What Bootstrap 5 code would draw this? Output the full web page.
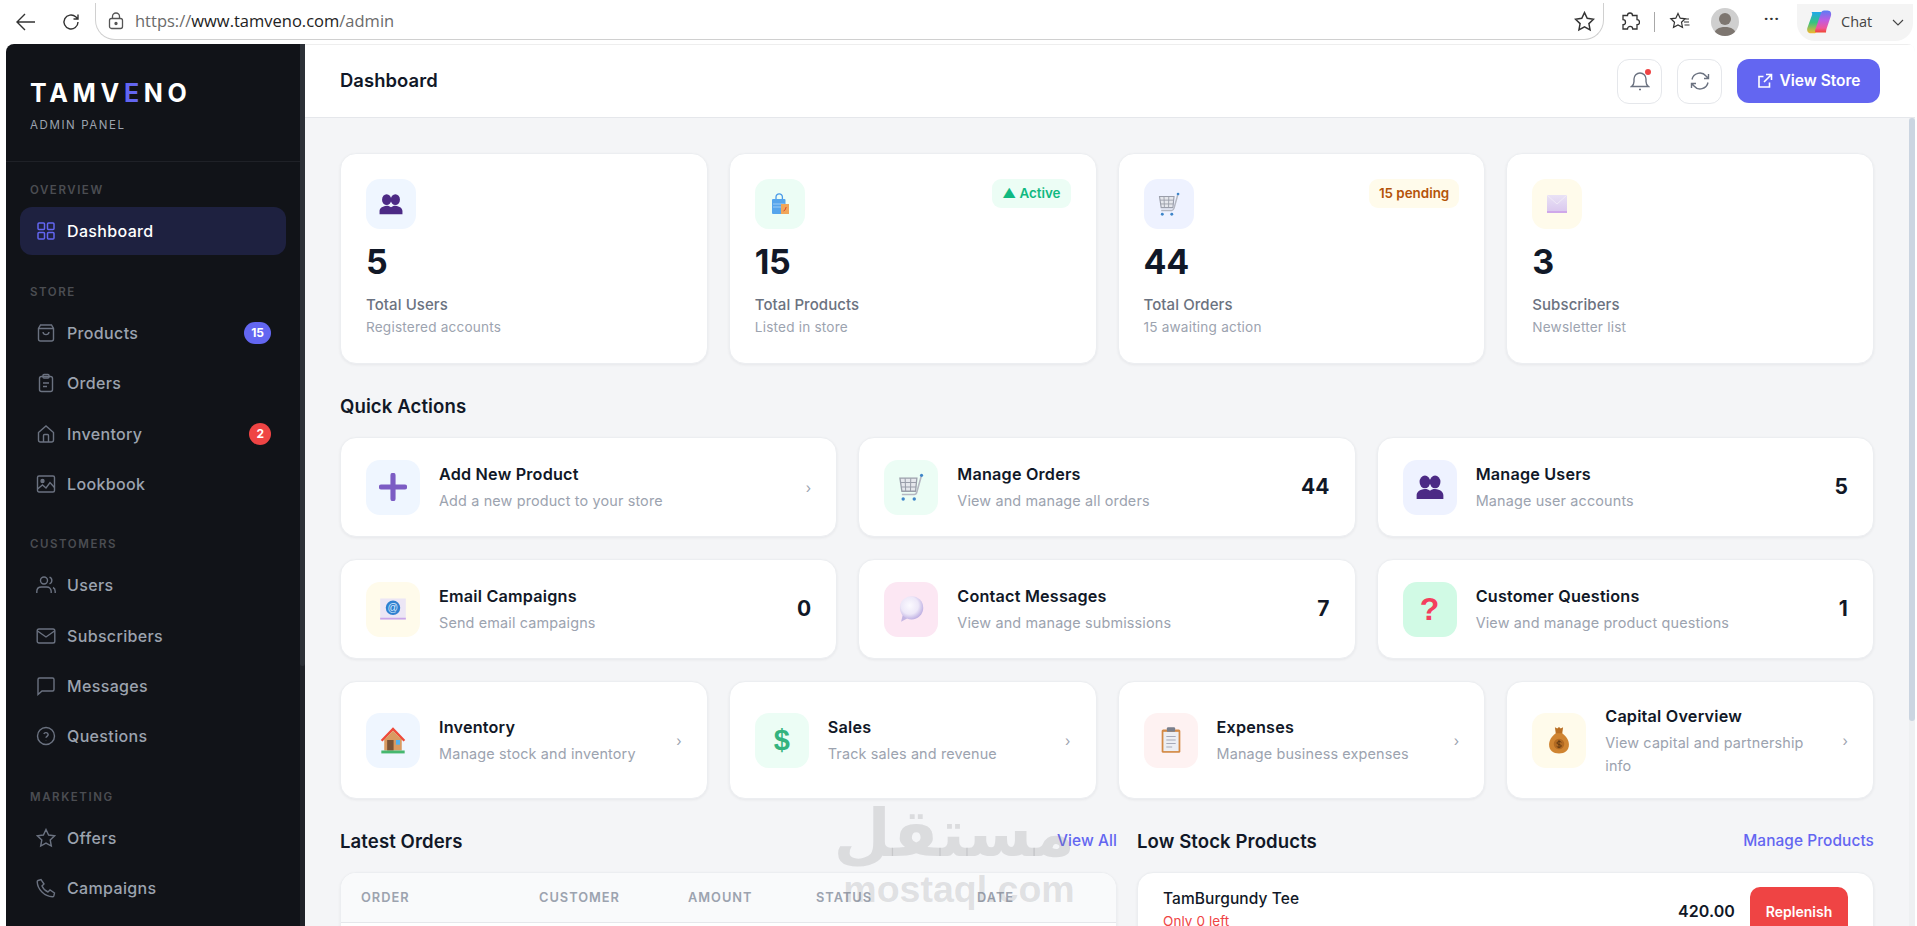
<!DOCTYPE html>
<html lang="en">
<head>
<meta charset="utf-8">
<title>Tamveno Admin</title>
<link href="https://cdn.jsdelivr.net/npm/bootstrap@5.3.0/dist/css/bootstrap.min.css" rel="stylesheet">
<style>
html,body{height:926px;overflow:hidden;background:#fff}
body{font-family:Inter,"Noto Sans",sans-serif;color:#111827;letter-spacing:.005em}
.chrome{height:44px;font-family:"Open Sans","Noto Sans",sans-serif;color:#333;padding-left:15px}
.chrome-ic{color:#333;flex:none}
.ic-reload{margin-left:24px}
.addr{width:1509px;height:37px;margin-left:14px;margin-top:-1px;border:1px solid #d0d0d0;border-top:0;border-radius:0 0 20px 20px;padding:0 8px 0 12px;font-size:16.5px;letter-spacing:0;flex:none}
.addr .dim{color:#6b6b6b}.addr .host{color:#222}
.ic-lock{flex:none;margin-right:11px}
.ic-star-b{margin-left:auto}
.ic-puzzle{margin-left:16px}
.sep-v{width:1px;height:20px;background:#a8a8a8;margin:0 14px;flex:none}
.avatar{width:28px;height:28px;border-radius:50%;background:#cfcfcf;overflow:hidden;margin-left:20px;flex:none}
.dots{font-size:15px;font-weight:700;letter-spacing:1px;line-height:1;margin-top:-7px;margin-left:25px;width:18px}
.chat-pill{width:116px;height:37px;border-radius:0 0 18px 18px;background:#f4f4f4;margin-left:15px;padding-left:8px;font-size:14.5px;letter-spacing:0;flex:none}
.chat-t{color:#444;margin-left:8px}
.shell{height:882px;padding-left:6px;padding-right:2px}
.side{width:299px;background:#111318;border-radius:8px 0 0 0;overflow:hidden;flex:none}
.side-inner{width:294px;flex:none}
.rail-dark{width:5px;background:#1f2228;flex:none}
.rail-dark i{display:block;height:622px;background:#2c3037;border-radius:0 0 3px 3px}
.brand-box{height:118px;padding:34px 24px 0;border-bottom:1px solid #1f2127}
.brand-name{font-size:25px;font-weight:700;letter-spacing:4.7px;color:#fff;line-height:30px}
.brand-name em{font-style:normal;color:#6366f1}
.brand-sub{font-size:11.5px;letter-spacing:1.6px;color:#9ca3af;margin-top:9px;line-height:16px}
.side-sec{padding:26.5px 14px 0}
.side-sec.first{padding-top:20px}
.side-sec.second{padding-top:27px}
.side-label{font-size:11.5px;font-weight:600;letter-spacing:1.55px;color:#4b4d52;line-height:16px;margin:0 0 9px 10px}
.side-link{height:48px;margin-bottom:2.2px;border-radius:12px;padding:0 15px 0 17px;color:#9ca3af;font-size:16px;font-weight:500;letter-spacing:.35px;text-decoration:none}
.side-link svg{width:20px;height:20px;color:#6b7280;margin-right:11px;flex:none;margin-left:-1px}
.side-link.on{background:#1e2140;color:#fff}
.side-link.on svg{color:#6366f1}
.pill{border-radius:11px;height:22px;line-height:22px;padding:0 7px;font-size:12px;font-weight:700;color:#fff;letter-spacing:0}
.pill-i{background:#6366f1}.pill-r{background:#ef4444}
.mainp{min-width:0;background:#f4f5f7;border-radius:0 8px 0 0;overflow:hidden}
.toph{height:74px;background:#fff;border-bottom:1px solid #e5e7eb;border-top:1px solid #eee;padding:0 35px 0 35px}
.toph h1{font-size:18.4px;font-weight:600;margin:0 0 2px}
.tbtn{width:45px;height:45px;border:1px solid #e5e7eb;border-radius:12px;background:#fff;color:#6b7280;padding:0;margin-left:15px}
.tbtn svg{width:20px;height:20px}
.dot{width:6px;height:6px;border-radius:50%;background:#ef4444;top:9px;right:10px}
.vbtn{width:143px;height:44px;background:#6366f1;border:0;border-radius:12px;color:#fff;font-size:15.5px;font-weight:600;margin-left:15px;padding:0}
.vbtn svg{width:16px;height:16px;margin-right:7px}
.pane{height:808px;overflow:hidden}
.pane-in{padding:35px 35px 0 35px;min-width:0}
.rail-light{width:6px;background:#eef0f2;flex:none}
.rail-light i{display:block;height:603px;background:#cbd5e1;border-radius:3px}
.g4{display:grid;grid-template-columns:repeat(4,1fr);gap:22px 21px}
.g3{display:grid;grid-template-columns:repeat(3,1fr);gap:22px 21px}
.g2{display:grid;grid-template-columns:777fr 737fr;gap:20px}
.row-gap{margin-top:22px}
.tile{border:1px solid #eceef1;border-radius:16px;box-shadow:0 1px 3px rgba(17,24,39,.06);background:#fff}
.stat{height:211px;padding:25px 25px 0}
.boxi{width:50px;height:50px;border-radius:14px}
.boxi svg{width:24px;height:24px}
.boxa{width:54px;height:55px;border-radius:14px;flex:none}
.boxa svg{width:28px;height:28px}
.b-blue{background:#eff6ff}.b-green{background:#ecfdf5}.b-ind{background:#eef2ff}.b-yel{background:#fffbeb}.b-pink{background:#fce7f3}.b-mint{background:#d1fae5}.b-red{background:#fef2f2}
.chip{border-radius:9px;height:29px;line-height:29px;padding:0 10px;font-size:13.4px;font-weight:600;letter-spacing:0}
.chip-g{background:#ecfdf5;color:#10b981}.chip-y{background:#fffbeb;color:#b45309}
.val{font-size:34px;font-weight:700;line-height:40px;margin-top:13px;letter-spacing:-.01em}
.lab{font-size:15px;line-height:20px;color:#6b7280;margin-top:13px;font-weight:500}
.sub{font-size:13.6px;line-height:20px;color:#9ca3af;margin-top:2px;letter-spacing:.2px}
.sec-t{font-size:18.6px;font-weight:600;line-height:24px;margin:30px 0 19px}
.act{padding:21.5px 25px;min-height:100px}
.act-txt{margin-left:19px;min-width:0}
.act-t{font-size:16.2px;font-weight:600;line-height:24px;letter-spacing:.2px}
.act-s{font-size:14.4px;line-height:23px;color:#9ca3af;margin-top:3px;letter-spacing:.15px}
.act-n{font-size:21px;font-weight:700;margin-left:auto;padding-left:10px}
.chev{margin-left:auto;padding-left:10px;color:#9ca3af;font-size:14px}
.t-row{height:118px;min-height:118px}
.t-row .act-txt{max-width:222px}
.linkv{color:#6366f1;font-size:15.4px;font-weight:500;letter-spacing:.1px;text-decoration:none}
.tb-card{height:120px;overflow:hidden}
.tb-head th{background:#f9fafb;height:49px;font-size:12.8px;font-weight:600;letter-spacing:1px;color:#9ca3af;padding:0 0 0 20px;vertical-align:middle;border-bottom:1px solid #e5e7eb}
.table-fix{table-layout:fixed;width:100%}
.c1{width:178px}.c2{width:149px}.c3{width:128px}.c4{width:161px}
.low-card{height:120px;padding:14px 25px 0}
.low-n{font-size:15.5px;font-weight:500;line-height:24px}
.low-s{font-size:13.5px;color:#ef4444;line-height:20px}
.low-p{font-size:16px;font-weight:600;margin-left:auto;line-height:49px}
.rep{width:98px;height:49px;background:#ef4444;color:#fff;border:0;border-radius:10px;font-size:14px;font-weight:600;margin-left:15px;padding:0}
.mark-wm{left:843px;top:794px;width:232px;color:rgba(120,120,125,.2);text-align:center;pointer-events:none}
.wm-ar{font-family:"DejaVu Sans",sans-serif;font-weight:700;font-size:66px;line-height:80px;letter-spacing:0}
.wm-en{font-family:"Liberation Sans",sans-serif;font-weight:700;font-size:37.5px;line-height:30px;letter-spacing:0}
.txt-q{font-family:"Liberation Sans",sans-serif;font-weight:700;font-size:32px;color:#f43f5e;line-height:1}
.txt-d{font-family:"Liberation Sans",sans-serif;font-weight:700;font-size:29px;color:#34b37e;line-height:1}
</style>
</head>
<body class="position-relative">
<svg width="0" height="0" class="position-absolute">
<defs>
<linearGradient id="gb" x1="0" y1="0" x2="0" y2="1"><stop offset="0" stop-color="#e9e2f5"/><stop offset="1" stop-color="#d9c6ee"/></linearGradient>
<radialGradient id="gc" cx=".42" cy=".4" r=".62"><stop offset="0" stop-color="#fbfaff"/><stop offset=".6" stop-color="#ede8f8"/><stop offset="1" stop-color="#bdaee2"/></radialGradient>
<linearGradient id="co1" x1="0" y1="0" x2="0" y2="1"><stop offset="0" stop-color="#1fa8ec"/><stop offset=".5" stop-color="#37c47f"/><stop offset="1" stop-color="#f5b72e"/></linearGradient>
<linearGradient id="co2" x1="0" y1="0" x2="0" y2="1"><stop offset="0" stop-color="#5b7cf5"/><stop offset=".45" stop-color="#c05be0"/><stop offset=".8" stop-color="#f0569a"/><stop offset="1" stop-color="#f0452f"/></linearGradient>
<symbol id="e-users" viewBox="1 2 22 20"><g fill="#4c2a85"><ellipse cx="8" cy="8" rx="4.200" ry="5"/><ellipse cx="16" cy="8" rx="4.200" ry="5"/><path d="M1.500 21.500v-3c0-2.800 2.400-4.500 6.500-5 1.700 0 3 .5 4 1.400 1-.9 2.300-1.400 4-1.400 4.100.5 6.500 2.200 6.500 5v3z"/></g></symbol>
<symbol id="e-bag" viewBox="0 0 24 24"><path d="M8 8V5a3.200 3.200 0 0 1 6.400 0v3" fill="none" stroke="#4b9ae8" stroke-width="1.300"/><rect x="4" y="7" width="13.500" height="15" rx="1" fill="#56a5ec"/><path d="M5 12h11.500M5 15h11.500" stroke="#9ccdf5" stroke-width="1"/><rect x="13" y="12" width="8" height="10" fill="#f0a65a"/><path d="M15.500 19l1.500-1 1.200-3" stroke="#d9482f" stroke-width="1" fill="none"/></symbol>
<symbol id="e-cart" viewBox="3 1 19 21.500"><path d="M4 5h13l-1 10H5.500z" fill="#e5e7ec" stroke="#9a9eaa" stroke-width="1"/><path d="M8 5l.4 10M12.300 5l-.2 10M4.400 8.300h12.300M4.800 11.700h11.600" stroke="#9a9eaa" stroke-width=".8"/><path d="M20.500 3L17 15.500c-.3 1.300-.8 2-2 2H5.500" fill="none" stroke="#b5b8c2" stroke-width="1.300"/><circle cx="20.600" cy="2.800" r="1.200" fill="#3f86c9"/><circle cx="6.500" cy="21" r="1.300" fill="#3f86c9"/><circle cx="15" cy="21" r="1.300" fill="#3f86c9"/></symbol>
<symbol id="e-env" viewBox="0 0 24 24"><rect x="2" y="3" width="20" height="18" fill="url(#gb)"/><path d="M2 19h20v2H2z" fill="#cfa8ea"/><path d="M2 3l10 9 10-9" fill="none" stroke="#f2edf8" stroke-width=".8"/></symbol>
<symbol id="e-mail" viewBox="0 0 24 24"><rect x="1" y="3" width="22" height="18" fill="#ece6f5"/><path d="M1 19.500h22V21H1z" fill="#c9a5e8"/><circle cx="12" cy="11" r="6.200" fill="#2f80d0"/><text x="12" y="14" font-family="Liberation Sans" font-size="9" fill="#d6e8fb" text-anchor="middle">@</text></symbol>
<symbol id="e-plus" viewBox="0 0 24 24"><path d="M12 2v20M2 12h20" stroke="#7c5cc4" stroke-width="4.400" stroke-linecap="round"/></symbol>
<symbol id="e-chat" viewBox="0 0 24 24"><path d="M5 17l-1.500 6 5.500-3z" fill="#c3b6e3"/><circle cx="12.500" cy="11" r="10" fill="url(#gc)"/></symbol>
<symbol id="e-house" viewBox="0 0 24 24"><rect x="4.500" y="10" width="15" height="11" fill="#d99a62"/><path d="M12 1L1.500 12l1.500 1.300L12 4l9 9.300 1.500-1.300z" fill="#ef4a3a"/><path d="M12 4l-7.500 7.500h15z" fill="#d99a62"/><rect x="7" y="12" width="5.500" height="9" fill="#7a5236"/><rect x="14.500" y="12" width="3.500" height="4" fill="#56b2ee"/><rect x="2" y="21" width="20" height="2.500" fill="#46b86f"/></symbol>
<symbol id="e-clip" viewBox="0 0 24 24"><rect x="4" y="3" width="16" height="20" rx="1.300" fill="#d38a45"/><rect x="5.500" y="5" width="13" height="16.500" fill="#eceef3"/><rect x="8.500" y="1" width="7" height="4" rx="1" fill="#7a7f8c"/><path d="M8 9h8M8 12h8M8 15h8M8 18h5" stroke="#a6a9b8" stroke-width="1"/></symbol>
<symbol id="e-money" viewBox="0 0 24 24"><path d="M9.500 6C6 8.500 3.500 12 3.500 16c0 5 3.500 7.500 8.500 7.500s8.500-2.500 8.500-7.500c0-4-2.500-7.500-6-10z" fill="#cf8431"/><path d="M8.500 1l2 1.200L12 .8l1.500 1.400 2-1.200-.7 5.200H9.200z" fill="#b96f24"/><circle cx="12" cy="15.500" r="4.500" fill="#b26a22"/><path d="M12 12v7M14 14c-.5-1-3.800-1-3.800.6s3.800.9 3.800 2.500-3.400 1.400-4 .3" fill="none" stroke="#5c3611" stroke-width=".8"/></symbol>
<symbol id="i-grid" viewBox="0 0 20 20" fill="none" stroke="currentColor" stroke-width="1.500"><rect x="2" y="2" width="6.500" height="6.500" rx="1"/><rect x="11.500" y="2" width="6.500" height="6.500" rx="1"/><rect x="2" y="11.500" width="6.500" height="6.500" rx="1"/><rect x="11.500" y="11.500" width="6.500" height="6.500" rx="1"/></symbol>
<symbol id="i-box" viewBox="0 0 20 20" fill="none" stroke="currentColor" stroke-width="1.400"><path d="M4.500 2h11l2 3.500V16a2 2 0 0 1-2 2h-11a2 2 0 0 1-2-2V5.500z"/><path d="M2.500 5.500h15M7 9c.5 3.500 5.500 3.500 6 0"/></symbol>
<symbol id="i-clip" viewBox="0 0 20 20" fill="none" stroke="currentColor" stroke-width="1.400"><rect x="3.500" y="3.500" width="13" height="15" rx="2"/><rect x="7" y="1.500" width="6" height="3.500" rx="1"/><path d="M7 10h6M7 13.500h4"/></symbol>
<symbol id="i-home" viewBox="0 0 20 20" fill="none" stroke="currentColor" stroke-width="1.400"><path d="M2.500 8.500L10 2l7.500 6.500V16a2 2 0 0 1-2 2h-11a2 2 0 0 1-2-2z"/><path d="M7.500 18v-6.500a1 1 0 0 1 1-1h3a1 1 0 0 1 1 1V18"/></symbol>
<symbol id="i-img" viewBox="0 0 20 20" fill="none" stroke="currentColor" stroke-width="1.400"><rect x="1.500" y="2" width="17" height="16" rx="1.500"/><circle cx="6.500" cy="7" r="1.500" fill="currentColor"/><path d="M1.500 15l5-4 3.500 3 4-5.500 4.500 5"/></symbol>
<symbol id="i-users" viewBox="0 0 20 20" fill="none" stroke="currentColor" stroke-width="1.400"><circle cx="8" cy="5.500" r="3.500"/><path d="M.8 18v-1.500c0-2.800 2-4.500 4.500-4.500h5.400c2.500 0 4.500 1.700 4.500 4.500V18M13.500 2.200a3.500 3.500 0 0 1 0 6.600M17 12.500c1.400.7 2.200 2.200 2.200 4V18"/></symbol>
<symbol id="i-mail" viewBox="0 0 20 20" fill="none" stroke="currentColor" stroke-width="1.400"><rect x="1.200" y="3" width="17.600" height="14" rx="1.800"/><path d="M1.500 5l8.500 6 8.500-6"/></symbol>
<symbol id="i-msg" viewBox="0 0 20 20" fill="none" stroke="currentColor" stroke-width="1.400"><path d="M2 3.500a1.500 1.500 0 0 1 1.500-1.500h13A1.500 1.500 0 0 1 18 3.500v10a1.500 1.500 0 0 1-1.500 1.500H6L2 18.500z"/></symbol>
<symbol id="i-q" viewBox="0 0 20 20" fill="none" stroke="currentColor" stroke-width="1.400"><circle cx="10" cy="10" r="8.500"/><path d="M7.800 8a2.300 2.300 0 0 1 4.400.6c0 1.500-2.200 1.900-2.200 3.100M10 14.300v.1"/></symbol>
<symbol id="i-star" viewBox="0 0 20 20" fill="none" stroke="currentColor" stroke-width="1.400"><path d="M10 1.500l2.600 5.500 6 .8-4.400 4.200 1.100 6L10 15.100 4.700 18l1.100-6L1.400 7.800l6-.8z"/></symbol>
<symbol id="i-phone" viewBox="0 0 20 20" fill="none" stroke="currentColor" stroke-width="1.400"><path d="M2 2.500l3-1 3 4.500-2 2c1 2.500 3 4.700 6 6l2-2 4.500 3-.7 3c-.2.500-.7.800-1.300.8C8.500 18.500 1.500 11.500 1.200 3.800c0-.6.300-1.100.8-1.300z"/></symbol>
</defs>
</svg>

<div class="chrome d-flex align-items-center">
  <svg class="chrome-ic" width="22" height="22" viewBox="0 0 22 22" fill="none" stroke="currentColor" stroke-width="1.400"><path d="M20 11H2M10 3l-8 8 8 8"/></svg>
  <svg class="chrome-ic ic-reload" width="20" height="20" viewBox="0 0 20 20" fill="none" stroke="currentColor" stroke-width="1.400"><path d="M17 10a7 7 0 1 1-2.300-5.200L17 7M17 2.500V7h-4.500"/></svg>
  <div class="addr d-flex align-items-center">
    <svg class="ic-lock" width="16" height="18" viewBox="0 0 16 18" fill="none" stroke="#555" stroke-width="1.300"><rect x="1.500" y="6.500" width="13" height="10" rx="2"/><path d="M4.500 6.500V4.500a3.500 3.500 0 0 1 7 0v2"/><circle cx="8" cy="11.500" r="1" fill="#555"/></svg>
    <span><span class="dim">https://</span><span class="host">www.tamveno.com</span><span class="dim">/admin</span></span>
    <svg class="ic-star-b" width="21" height="21" viewBox="0 0 20 20" color="#333"><use href="#i-star"/></svg>
  </div>
  <svg class="chrome-ic ic-puzzle" width="20" height="20" viewBox="0 0 20 20" fill="none" stroke="currentColor" stroke-width="1.300"><path d="M7.500 3.500a2.500 2.500 0 0 1 5 0H17v4.200a2.500 2.500 0 0 1 0 5V17h-4.300a2.600 2.600 0 0 0-5.200 0H3v-4.300a2.500 2.500 0 0 0 0-5V3.500z"/></svg>
  <span class="sep-v"></span>
  <svg class="chrome-ic" width="22" height="20" viewBox="0 0 22 20" fill="none" stroke="currentColor" stroke-width="1.200"><path d="M9 1.500l2.200 4.700 5 .6-3.700 3.500 1 5L9 13l-4.500 2.300 1-5L1.800 6.800l5-.6zM15 10h5M15.500 13h5M16 7h4"/></svg>
  <div class="avatar d-flex flex-column align-items-center">
    <svg width="28" height="28" viewBox="0 0 28 28"><circle cx="14" cy="11" r="6" fill="#7d7670"/><path d="M3 28c0-7 5-9 11-9s11 2 11 9z" fill="#7d7670"/></svg>
  </div>
  <span class="dots">···</span>
  <div class="chat-pill d-flex align-items-center">
    <svg class="flex-none" width="28" height="28" viewBox="0 0 28 28"><path d="M7 4h9c1.500 0 2 1 1.500 2.500L12 23c-.5 1.500-1.300 2.300-3 2.300H6c-3.500 0-4.500-3-3.500-5.800L7 7c.3-1 .3-2-.5-3z" fill="url(#co1)"/><path d="M21 24.500h-9.500c-1.300 0-1.800-1-1.300-2.500L16 5c.5-1.500 1.300-2.500 3-2.500h3.500c3.300 0 4.300 3 3.300 5.800L21.500 21c-.4 1.300-.4 2.500-.5 3.500z" fill="url(#co2)"/></svg>
    <span class="chat-t">Chat</span>
    <svg class="ms-auto me-2" width="14" height="14" viewBox="0 0 14 14" fill="none" stroke="#444" stroke-width="1.100"><path d="M2 5l5 5 5-5"/></svg>
  </div>
</div>

<div class="shell d-flex">
  <aside class="side d-flex">
    <div class="side-inner">
      <div class="brand-box">
        <div class="brand-name">TAMV<em>E</em>NO</div>
        <div class="brand-sub">ADMIN PANEL</div>
      </div>
      <div class="side-sec first">
        <div class="side-label">OVERVIEW</div>
        <a class="side-link on d-flex align-items-center" href="#"><svg><use href="#i-grid"/></svg>Dashboard</a>
      </div>
      <div class="side-sec second">
        <div class="side-label">STORE</div>
        <a class="side-link d-flex align-items-center" href="#"><svg><use href="#i-box"/></svg>Products<span class="pill pill-i ms-auto">15</span></a>
        <a class="side-link d-flex align-items-center" href="#"><svg><use href="#i-clip"/></svg>Orders</a>
        <a class="side-link d-flex align-items-center" href="#"><svg><use href="#i-home"/></svg>Inventory<span class="pill pill-r ms-auto">2</span></a>
        <a class="side-link d-flex align-items-center" href="#"><svg><use href="#i-img"/></svg>Lookbook</a>
      </div>
      <div class="side-sec">
        <div class="side-label">CUSTOMERS</div>
        <a class="side-link d-flex align-items-center" href="#"><svg><use href="#i-users"/></svg>Users</a>
        <a class="side-link d-flex align-items-center" href="#"><svg><use href="#i-mail"/></svg>Subscribers</a>
        <a class="side-link d-flex align-items-center" href="#"><svg><use href="#i-msg"/></svg>Messages</a>
        <a class="side-link d-flex align-items-center" href="#"><svg><use href="#i-q"/></svg>Questions</a>
      </div>
      <div class="side-sec">
        <div class="side-label">MARKETING</div>
        <a class="side-link d-flex align-items-center" href="#"><svg><use href="#i-star"/></svg>Offers</a>
        <a class="side-link d-flex align-items-center" href="#"><svg><use href="#i-phone"/></svg>Campaigns</a>
      </div>
    </div>
    <div class="rail-dark"><i></i></div>
  </aside>

  <main class="mainp flex-grow-1 d-flex flex-column">
    <header class="toph d-flex align-items-center">
      <h1>Dashboard</h1>
      <button class="tbtn btn ms-auto position-relative d-flex align-items-center justify-content-center" type="button">
        <svg viewBox="0 0 20 20" fill="none" stroke="currentColor" stroke-width="1.400"><path d="M1.500 15.500h17c-1.500-1-2.500-2.500-2.500-5V8a6 6 0 0 0-12 0v2.500c0 2.500-1 4-2.500 5zM9 18.500h2"/></svg>
        <span class="dot position-absolute"></span>
      </button>
      <button class="tbtn btn d-flex align-items-center justify-content-center" type="button">
        <svg viewBox="0 0 20 20" fill="none" stroke="currentColor" stroke-width="1.400"><path d="M2 8.500A8 8 0 0 1 16 5l2.500 2.500M18.500 3v4.500H14M18 11.500A8 8 0 0 1 4 15l-2.500-2.500M1.500 17v-4.500H6"/></svg>
      </button>
      <button class="vbtn btn d-flex align-items-center justify-content-center" type="button">
        <svg viewBox="0 0 16 16" fill="none" stroke="currentColor" stroke-width="1.600"><path d="M12.500 9.500V14H2V3.500h4.500M9 1.500h5.500V7M14.500 1.500L7 9"/></svg>View Store
      </button>
    </header>
    <div class="d-flex flex-grow-1 pane">
      <div class="pane-in flex-grow-1">
        <div class="g4">
          <div class="tile stat">
            <div class="d-flex justify-content-between align-items-start"><div class="boxi b-blue d-flex align-items-center justify-content-center"><svg><use href="#e-users"/></svg></div></div>
            <div class="val">5</div><div class="lab">Total Users</div><div class="sub">Registered accounts</div>
          </div>
          <div class="tile stat">
            <div class="d-flex justify-content-between align-items-start"><div class="boxi b-green d-flex align-items-center justify-content-center"><svg><use href="#e-bag"/></svg></div><span class="chip chip-g">▲ Active</span></div>
            <div class="val">15</div><div class="lab">Total Products</div><div class="sub">Listed in store</div>
          </div>
          <div class="tile stat">
            <div class="d-flex justify-content-between align-items-start"><div class="boxi b-ind d-flex align-items-center justify-content-center"><svg><use href="#e-cart"/></svg></div><span class="chip chip-y">15 pending</span></div>
            <div class="val">44</div><div class="lab">Total Orders</div><div class="sub">15 awaiting action</div>
          </div>
          <div class="tile stat">
            <div class="d-flex justify-content-between align-items-start"><div class="boxi b-yel d-flex align-items-center justify-content-center"><svg><use href="#e-env"/></svg></div></div>
            <div class="val">3</div><div class="lab">Subscribers</div><div class="sub">Newsletter list</div>
          </div>
        </div>

        <div class="sec-t">Quick Actions</div>
        <div class="g3">
          <div class="tile act d-flex align-items-center"><div class="boxa b-blue d-flex align-items-center justify-content-center"><svg><use href="#e-plus"/></svg></div><div class="act-txt"><div class="act-t">Add New Product</div><div class="act-s">Add a new product to your store</div></div><span class="chev">›</span></div>
          <div class="tile act d-flex align-items-center"><div class="boxa b-green d-flex align-items-center justify-content-center"><svg><use href="#e-cart"/></svg></div><div class="act-txt"><div class="act-t">Manage Orders</div><div class="act-s">View and manage all orders</div></div><span class="act-n">44</span></div>
          <div class="tile act d-flex align-items-center"><div class="boxa b-ind d-flex align-items-center justify-content-center"><svg><use href="#e-users"/></svg></div><div class="act-txt"><div class="act-t">Manage Users</div><div class="act-s">Manage user accounts</div></div><span class="act-n">5</span></div>
          <div class="tile act d-flex align-items-center"><div class="boxa b-yel d-flex align-items-center justify-content-center"><svg><use href="#e-mail"/></svg></div><div class="act-txt"><div class="act-t">Email Campaigns</div><div class="act-s">Send email campaigns</div></div><span class="act-n">0</span></div>
          <div class="tile act d-flex align-items-center"><div class="boxa b-pink d-flex align-items-center justify-content-center"><svg><use href="#e-chat"/></svg></div><div class="act-txt"><div class="act-t">Contact Messages</div><div class="act-s">View and manage submissions</div></div><span class="act-n">7</span></div>
          <div class="tile act d-flex align-items-center"><div class="boxa b-mint d-flex align-items-center justify-content-center"><span class="txt-q">?</span></div><div class="act-txt"><div class="act-t">Customer Questions</div><div class="act-s">View and manage product questions</div></div><span class="act-n">1</span></div>
        </div>
        <div class="g4 row-gap">
          <div class="tile act t-row d-flex align-items-center"><div class="boxa b-blue d-flex align-items-center justify-content-center"><svg><use href="#e-house"/></svg></div><div class="act-txt"><div class="act-t">Inventory</div><div class="act-s">Manage stock and inventory</div></div><span class="chev">›</span></div>
          <div class="tile act t-row d-flex align-items-center"><div class="boxa b-green d-flex align-items-center justify-content-center"><span class="txt-d">$</span></div><div class="act-txt"><div class="act-t">Sales</div><div class="act-s">Track sales and revenue</div></div><span class="chev">›</span></div>
          <div class="tile act t-row d-flex align-items-center"><div class="boxa b-red d-flex align-items-center justify-content-center"><svg><use href="#e-clip"/></svg></div><div class="act-txt"><div class="act-t">Expenses</div><div class="act-s">Manage business expenses</div></div><span class="chev">›</span></div>
          <div class="tile act t-row d-flex align-items-center"><div class="boxa b-yel d-flex align-items-center justify-content-center"><svg><use href="#e-money"/></svg></div><div class="act-txt"><div class="act-t">Capital Overview</div><div class="act-s">View capital and partnership info</div></div><span class="chev">›</span></div>
        </div>

        <div class="g2">
          <div>
            <div class="d-flex justify-content-between align-items-center sec-t"><span>Latest Orders</span><a class="linkv" href="#">View All</a></div>
            <div class="tile tb-card">
              <table class="table-fix mb-0">
                <thead class="tb-head"><tr><th class="c1">ORDER</th><th class="c2">CUSTOMER</th><th class="c3">AMOUNT</th><th class="c4">STATUS</th><th>DATE</th></tr></thead>
              </table>
            </div>
          </div>
          <div>
            <div class="d-flex justify-content-between align-items-center sec-t"><span>Low Stock Products</span><a class="linkv" href="#">Manage Products</a></div>
            <div class="tile low-card d-flex">
              <div><div class="low-n">TamBurgundy Tee</div><div class="low-s">Only 0 left</div></div>
              <span class="low-p">420.00</span>
              <button class="rep btn" type="button">Replenish</button>
            </div>
          </div>
        </div>
      </div>
      <div class="rail-light"><i></i></div>
    </div>
  </main>
</div>

<div class="mark-wm position-absolute">
  <div class="wm-ar" dir="rtl" lang="ar">مستقل</div>
  <div class="wm-en">mostaql.com</div>
</div>
</body>
</html>
